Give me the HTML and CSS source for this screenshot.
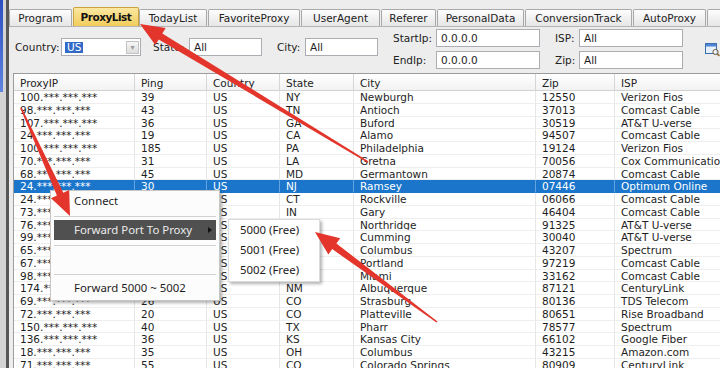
FILE: index.html
```html
<!DOCTYPE html>
<html lang="en">
<head>
  <meta charset="UTF-8">
  <link rel="stylesheet" href="styles.css">
  <title>ProxyList</title>
</head>
<body>
  <div class="screen">
    <div class="side"><div class="side-blue"></div></div>
    <div class="app">
      <div class="tabs">
        <div class="tab t-program">Program</div>
        <div class="tab t-proxylist active">ProxyList</div>
        <div class="tab t-today">TodayList</div>
        <div class="tab t-favorite">FavoriteProxy</div>
        <div class="tab t-agent">UserAgent</div>
        <div class="tab t-referer">Referer</div>
        <div class="tab t-personal">PersonalData</div>
        <div class="tab t-conversion">ConversionTrack</div>
        <div class="tab t-auto">AutoProxy</div>
        <div class="tab t-plugins">Plugins</div>
      </div>

      <div class="filters">
        <div class="field-row">
          <span class="lbl w-country">Country:</span>
          <div class="select"><span class="hl">US</span><div class="drop">&#9662;</div></div>
          <span class="lbl w-state">State:</span>
          <div class="box w-small">All</div>
          <span class="lbl w-city">City:</span>
          <div class="box w-small">All</div>
        </div>
        <div class="pair-group ip">
          <span class="lbl">StartIp:</span>
          <div class="box w-wide">0.0.0.0</div>
          <span class="lbl">EndIp:</span>
          <div class="box w-wide">0.0.0.0</div>
        </div>
        <div class="pair-group isp">
          <span class="lbl">ISP:</span>
          <div class="box w-wide">All</div>
          <span class="lbl">Zip:</span>
          <div class="box w-wide">All</div>
        </div>
        <svg class="find-icon" width="15" height="15" viewBox="0 0 15 15">
          <rect x="0.5" y="1.5" width="11" height="10" fill="#e6f0fb" stroke="#3d6fb0"/>
          <rect x="1" y="2" width="10" height="2.5" fill="#4f86d3"/>
          <circle cx="10.5" cy="10" r="2.6" fill="#ffffff" fill-opacity="0.7" stroke="#6b5a3c"/>
          <line x1="12.4" y1="11.9" x2="14.4" y2="13.9" stroke="#8a6a30" stroke-width="1.6"/>
        </svg>
      </div>

      <div class="grid">
        <div class="row head">
          <div class="cell">ProxyIP</div><div class="cell">Ping</div><div class="cell">Country</div><div class="cell">State</div><div class="cell">City</div><div class="cell">Zip</div><div class="cell">ISP</div>
        </div>
        <div class="row"><div class="cell">100.***.***.***</div><div class="cell">39</div><div class="cell">US</div><div class="cell">NY</div><div class="cell">Newburgh</div><div class="cell">12550</div><div class="cell">Verizon Fios</div></div>
        <div class="row"><div class="cell">98.***.***.***</div><div class="cell">43</div><div class="cell">US</div><div class="cell">TN</div><div class="cell">Antioch</div><div class="cell">37013</div><div class="cell">Comcast Cable</div></div>
        <div class="row"><div class="cell">107.***.***.***</div><div class="cell">36</div><div class="cell">US</div><div class="cell">GA</div><div class="cell">Buford</div><div class="cell">30519</div><div class="cell">AT&amp;T U-verse</div></div>
        <div class="row"><div class="cell">24.***.***.***</div><div class="cell">19</div><div class="cell">US</div><div class="cell">CA</div><div class="cell">Alamo</div><div class="cell">94507</div><div class="cell">Comcast Cable</div></div>
        <div class="row"><div class="cell">100.***.***.***</div><div class="cell">185</div><div class="cell">US</div><div class="cell">PA</div><div class="cell">Philadelphia</div><div class="cell">19124</div><div class="cell">Verizon Fios</div></div>
        <div class="row"><div class="cell">70.***.***.***</div><div class="cell">31</div><div class="cell">US</div><div class="cell">LA</div><div class="cell">Gretna</div><div class="cell">70056</div><div class="cell">Cox Communications</div></div>
        <div class="row"><div class="cell">68.***.***.***</div><div class="cell">45</div><div class="cell">US</div><div class="cell">MD</div><div class="cell">Germantown</div><div class="cell">20874</div><div class="cell">Comcast Cable</div></div>
        <div class="row sel"><div class="cell">24.***.***.***</div><div class="cell">30</div><div class="cell">US</div><div class="cell">NJ</div><div class="cell">Ramsey</div><div class="cell">07446</div><div class="cell">Optimum Online</div></div>
        <div class="row"><div class="cell">24.***.***.***</div><div class="cell">28</div><div class="cell">US</div><div class="cell">CT</div><div class="cell">Rockville</div><div class="cell">06066</div><div class="cell">Comcast Cable</div></div>
        <div class="row"><div class="cell">73.***.***.***</div><div class="cell">33</div><div class="cell">US</div><div class="cell">IN</div><div class="cell">Gary</div><div class="cell">46404</div><div class="cell">Comcast Cable</div></div>
        <div class="row"><div class="cell">76.***.***.***</div><div class="cell">41</div><div class="cell">US</div><div class="cell">CA</div><div class="cell">Northridge</div><div class="cell">91325</div><div class="cell">AT&amp;T U-verse</div></div>
        <div class="row"><div class="cell">99.***.***.***</div><div class="cell">29</div><div class="cell">US</div><div class="cell">GA</div><div class="cell">Cumming</div><div class="cell">30040</div><div class="cell">AT&amp;T U-verse</div></div>
        <div class="row"><div class="cell">65.***.***.***</div><div class="cell">37</div><div class="cell">US</div><div class="cell">OH</div><div class="cell">Columbus</div><div class="cell">43207</div><div class="cell">Spectrum</div></div>
        <div class="row"><div class="cell">67.***.***.***</div><div class="cell">52</div><div class="cell">US</div><div class="cell">OR</div><div class="cell">Portland</div><div class="cell">97219</div><div class="cell">Comcast Cable</div></div>
        <div class="row"><div class="cell">98.***.***.***</div><div class="cell">34</div><div class="cell">US</div><div class="cell">FL</div><div class="cell">Miami</div><div class="cell">33162</div><div class="cell">Comcast Cable</div></div>
        <div class="row"><div class="cell">174.***.***.***</div><div class="cell">47</div><div class="cell">US</div><div class="cell">NM</div><div class="cell">Albuquerque</div><div class="cell">87121</div><div class="cell">CenturyLink</div></div>
        <div class="row"><div class="cell">69.***.***.***</div><div class="cell">26</div><div class="cell">US</div><div class="cell">CO</div><div class="cell">Strasburg</div><div class="cell">80136</div><div class="cell">TDS Telecom</div></div>
        <div class="row"><div class="cell">72.***.***.***</div><div class="cell">20</div><div class="cell">US</div><div class="cell">CO</div><div class="cell">Platteville</div><div class="cell">80651</div><div class="cell">Rise Broadband</div></div>
        <div class="row"><div class="cell">150.***.***.***</div><div class="cell">40</div><div class="cell">US</div><div class="cell">TX</div><div class="cell">Pharr</div><div class="cell">78577</div><div class="cell">Spectrum</div></div>
        <div class="row"><div class="cell">136.***.***.***</div><div class="cell">36</div><div class="cell">US</div><div class="cell">KS</div><div class="cell">Kansas City</div><div class="cell">66102</div><div class="cell">Google Fiber</div></div>
        <div class="row"><div class="cell">18.***.***.***</div><div class="cell">35</div><div class="cell">US</div><div class="cell">OH</div><div class="cell">Columbus</div><div class="cell">43215</div><div class="cell">Amazon.com</div></div>
        <div class="row"><div class="cell">71.***.***.***</div><div class="cell">55</div><div class="cell">US</div><div class="cell">CO</div><div class="cell">Colorado Springs</div><div class="cell">80909</div><div class="cell">CenturyLink</div></div>
      </div>
    </div>

    <!-- right-click menu on the selected row -->
    <div class="menu">
      <div class="item first">Connect</div>
      <div class="sep"></div>
      <div class="item hot">Forward Port To Proxy<span class="more"></span></div>
      <div class="sep wide"></div>
      <div class="item blank"></div>
      <div class="sep"></div>
      <div class="item">Forward 5000 ~ 5002</div>
    </div>
    <div class="submenu">
      <div class="sub-item">5000 (Free)</div>
      <div class="sub-item">5001 (Free)</div>
      <div class="sub-item">5002 (Free)</div>
    </div>

    <svg class="arrows" width="720" height="368" viewBox="0 0 720 368">
      <polygon points="140,24 165.7,27.9 162.3,33.4 368.4,161.3 367.6,162.7 158.7,39.4 155.3,45" />
      <polygon points="70,216 69.2,190 63.3,192.7 21.7,107.7 20.3,108.3 56.9,195.5 51,198.2" />
      <polygon points="315,232 340.2,238.3 336.4,243.5 437.5,321.4 436.5,322.6 332.2,249.1 328.4,254.4" />
    </svg>
  </div>
</body>
</html>
```

FILE: styles.css
```css
body {
  margin: 0;
  font-family: "DejaVu Sans", Verdana, sans-serif;
  font-size: 10.5px;
  color: #1e1e1e;
}

.screen {
  position: relative;
  width: 720px;
  height: 368px;
  overflow: hidden;
  display: flex;
  background: #ededed;
}

.side {
  width: 6px;
  flex: none;
  background: #d4d4d4;
  border-right: 3px solid #575757;
}

.side-blue {
  width: 3px;
  height: 92px;
  background: linear-gradient(#2c4ec2, #5f83e0);
}

.app {
  flex: 1;
  min-width: 0;
  display: flex;
  flex-direction: column;
}

/* tabs */
.tabs {
  display: flex;
  align-items: flex-end;
  height: 26px;
  border-bottom: 1px solid #b4b4b4;
  overflow: hidden;
}

.tab {
  flex: none;
  height: 17px;
  line-height: 16px;
  margin-right: 1px;
  box-sizing: border-box;
  border: 1px solid #a9a9a9;
  border-bottom: none;
  border-radius: 2px 2px 0 0;
  background: linear-gradient(#fdfdfd, #e6e6e6);
  white-space: nowrap;
  text-align: center;
  overflow: hidden;
  color: #222;
}

.t-program { width: 63px; }
.t-proxylist { width: 66px; margin-right: 0; }
.t-today { width: 68px; }
.t-favorite { width: 92px; }
.t-agent { width: 79px; }
.t-referer { width: 55px; }
.t-personal { width: 87px; }
.t-conversion { width: 107px; }
.t-auto { width: 73px; }
.t-plugins { width: 70px; }

.tab.active {
  height: 19px;
  line-height: 18px;
  font-weight: bold;
  letter-spacing: -0.5px;
  background: linear-gradient(#fbe7a2, #f2cd5a);
  border-color: #c9a43d;
  color: #111;
}

/* filter area */
.filters {
  display: flex;
  align-items: flex-start;
  height: 46px;
  padding: 2px 0 0 6px;
  box-sizing: border-box;
}

.field-row {
  display: flex;
  align-items: center;
  margin-top: 9px;
}

.lbl {
  white-space: nowrap;
  color: #222;
}

.w-country { width: 46px; }
.w-state { width: 36px; margin-left: 12px; }
.w-city { width: 28px; margin-left: 15px; }

.box {
  height: 18px;
  line-height: 17px;
  box-sizing: border-box;
  border: 1px solid #abadb3;
  background: #fff;
  padding-left: 4px;
  white-space: nowrap;
}

.w-small { width: 73px; }
.w-wide { width: 104px; }

.select {
  width: 80px;
  height: 18px;
  box-sizing: border-box;
  border: 1px solid #abadb3;
  background: #fff;
  display: flex;
  align-items: center;
  justify-content: space-between;
  padding: 0 1px 0 3px;
}

.hl {
  background: #3169c6;
  color: #fff;
  padding: 0 2px;
  line-height: 11px;
}

.drop {
  width: 13px;
  height: 13px;
  box-sizing: border-box;
  border: 1px solid #c3c3c3;
  background: linear-gradient(#f6f6f6, #dedede);
  color: #9a9a9a;
  font-size: 8px;
  line-height: 12px;
  text-align: center;
}

.pair-group {
  display: grid;
  grid-template-rows: 18px 18px;
  row-gap: 4px;
  align-items: center;
  margin-left: 15px;
}

.pair-group.ip { grid-template-columns: 43px 104px; }
.pair-group.isp { grid-template-columns: 24px 104px; }

.find-icon {
  margin: 13px 0 0 22px;
  flex: none;
}

/* proxy grid */
.grid {
  flex: 1;
  margin-left: 4px;
  border: 1px solid #9c9c9c;
  border-right: none;
  border-bottom: none;
  background: #fff;
  overflow: hidden;
}

.row {
  display: grid;
  grid-template-columns: 121px 72px 73px 74px 182px 79px 160px;
  height: 12.76px;
}

.cell {
  padding-left: 6px;
  box-sizing: border-box;
  border-right: 1px solid #e6e6e6;
  border-bottom: 1px solid #eeeeee;
  line-height: 12px;
  white-space: nowrap;
  overflow: hidden;
}

.row.head {
  height: 17px;
  background: linear-gradient(#ffffff, #f1f1f1);
}

.row.head .cell {
  line-height: 17px;
  padding-top: 1px;
  border-right-color: #d6d6d6;
  border-bottom-color: #d2d2d2;
  color: #222;
}

.row.sel {
  background: #1b76cb;
  color: #fff;
}

.row.sel .cell {
  border-right-color: #63a3de;
  border-bottom-color: #1b76cb;
}

/* context menu */
.menu {
  position: absolute;
  left: 50px;
  top: 190px;
  width: 170px;
  box-sizing: border-box;
  padding: 1px 0 2px;
  background: #fcfcfc;
  border: 1px solid #c6c6c6;
  box-shadow: 2px 2px 3px rgba(0, 0, 0, 0.3);
  font-family: "Noto Sans", "DejaVu Sans", sans-serif;
  font-size: 11.4px;
  color: #1c1c1c;
}

.item {
  height: 20px;
  line-height: 19px;
  margin: 0 3px;
  padding-left: 20px;
  position: relative;
}

.item.first {
  height: 21px;
  line-height: 17px;
}

.item.hot {
  background: #505050;
  color: #ececec;
}

.item.blank {
  height: 22px;
}

.more {
  position: absolute;
  right: 4px;
  top: 7px;
  border-left: 4px solid #111;
  border-top: 3.5px solid transparent;
  border-bottom: 3.5px solid transparent;
}

.sep {
  height: 1px;
  margin: 3px;
  background: #d2d2d2;
}

.sep.wide {
  margin-top: 5px;
}

.submenu {
  position: absolute;
  left: 228px;
  top: 219px;
  width: 92px;
  height: 63px;
  box-sizing: border-box;
  background: #fff;
  border: 1px solid #dcdcdc;
  box-shadow: 2px 2px 3px rgba(0, 0, 0, 0.3);
  font-family: "Noto Sans", "DejaVu Sans", sans-serif;
  font-size: 11.4px;
  color: #1c1c1c;
}

.sub-item {
  height: 20px;
  line-height: 19px;
  padding-left: 11px;
}

.arrows {
  position: absolute;
  left: 0;
  top: 0;
  pointer-events: none;
}

.arrows polygon {
  fill: #e3352b;
}
```
